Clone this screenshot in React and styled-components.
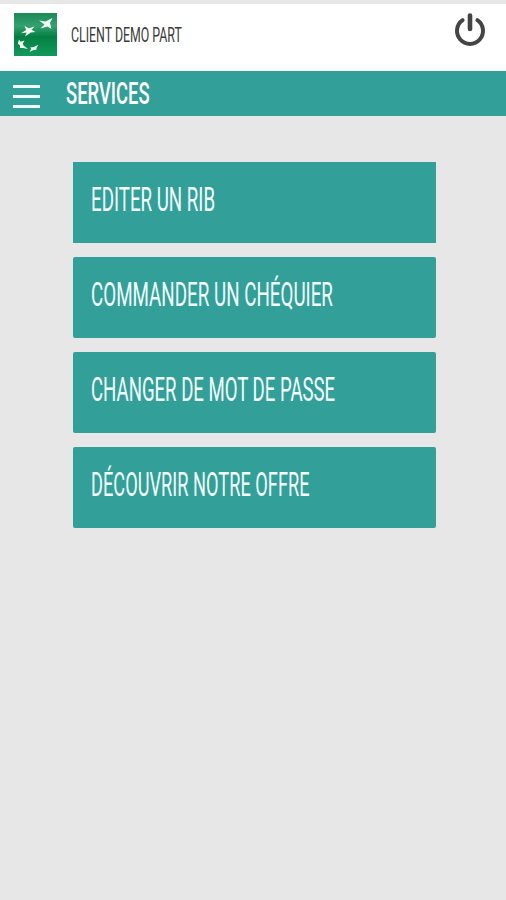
import React from 'react'
import styled, { createGlobalStyle } from 'styled-components'

const services = [
	{ label: 'EDITER UN RIB', stretch: 0.567, square: true },
	{ label: 'COMMANDER UN CHÉQUIER', stretch: 0.569 },
	{ label: 'CHANGER DE MOT DE PASSE', stretch: 0.563 },
	{ label: 'DÉCOUVRIR NOTRE OFFRE', stretch: 0.552 },
]

const Logo = () => (
	<svg width="43" height="43" viewBox="0 0 43 43">
		<defs>
			<linearGradient id="logo-green" x1="0" y1="0" x2="0" y2="1">
				<stop offset="0" stopColor="#1b8a57" />
				<stop offset="0.3" stopColor="#35a070" />
				<stop offset="0.55" stopColor="#047f43" />
				<stop offset="1" stopColor="#119a5c" />
			</linearGradient>
		</defs>
		<rect width="43" height="43" fill="url(#logo-green)" />
		<g fill="#f2fbf2">
			<path d="M25 7.5 L31.5 8.6 L38.5 5 L36 10 L37.5 16 L33.5 13.6 L26.5 15.5 L30.5 11.5 Z" />
			<path d="M10.5 13 L15 15.2 L20.5 13.4 L17.6 16.8 L21.5 19 L16.8 19.4 L11 23.5 L12.6 19.4 L7 20.2 L12.2 17 Z" />
			<path d="M5 26.5 L6.6 28.8 L10.5 27.5 L8.8 30.5 L9.5 32.5 L14 36 L9 35 L6 35 L6 32.5 L3.8 30.5 Z" />
			<path d="M24.5 31.8 L22.5 34.8 L22.5 36.8 L19.5 37 L15.5 39 L17.2 36 L16.2 34.6 L19.8 34 Z" />
		</g>
	</svg>
)

const PowerIcon = () => (
	<svg width="32" height="34" viewBox="0 0 32 34" fill="none" stroke="#444" strokeWidth="4" strokeLinecap="round">
		<path d="M8.6 7.2 A13 13 0 1 0 23.4 7.2" />
		<path d="M16 2.6 V16" strokeWidth="4.6" />
	</svg>
)

const App = () => {
	return (
		<Screen>
			<GlobalStyle />
			<Header>
				<Logo />
				<Client stretch={0.588}>CLIENT DEMO PART</Client>
				<IconButton aria-label="Déconnexion">
					<PowerIcon />
				</IconButton>
			</Header>
			<TitleBar>
				<Burger aria-label="Menu">
					<span />
					<span />
					<span />
				</Burger>
				<Title stretch={0.575}>SERVICES</Title>
			</TitleBar>
			<ServiceList>
				{services.map(({ label, stretch, square }) => (
					<ServiceButton key={label} square={square}>
						<Label stretch={stretch}>{label}</Label>
					</ServiceButton>
				))}
			</ServiceList>
		</Screen>
	)
}

export default App

const GlobalStyle = createGlobalStyle`
	* {
		box-sizing: border-box;
	}

	body {
		margin: 0;
		background-color: #e7e7e7;
	}

	button {
		border: none;
		padding: 0;
		background-color: transparent;
	}
`

const Screen = styled.div`
	min-height: 900px;
	border-top: 4px solid #e7e7e7;
	background-color: #e7e7e7;
	font-family: Roboto, 'Liberation Sans', sans-serif;
`

const Header = styled.header`
	display: flex;
	align-items: flex-start;
	height: 67px;
	padding: 9px 20px 0 14px;
	background-color: #fff;
`

const Condensed = styled.span.withConfig({ shouldForwardProp: (p) => p !== 'stretch' })`
	display: block;
	white-space: nowrap;
	transform: scaleX(${(props) => props.stretch});
	transform-origin: left center;
`

const Client = styled(Condensed)`
	margin: 10px 0 0 14px;
	color: #3a3a3a;
	font-size: 21px;
	font-weight: 400;
	line-height: 25px;
`

const IconButton = styled.button`
	height: 34px;
	margin-left: auto;
`

const TitleBar = styled.div`
	display: flex;
	height: 45px;
	padding-left: 13px;
	background-color: #329f99;
`

const Burger = styled.button`
	display: flex;
	flex-direction: column;
	gap: 7px;
	width: 27px;
	padding-top: 14px;

	span {
		width: 100%;
		height: 3px;
		background-color: #effcfb;
	}
`

const Title = styled(Condensed)`
	margin-left: 26px;
	color: #fff;
	font-size: 32px;
	font-weight: 500;
	line-height: 44px;
`

const ServiceList = styled.main`
	display: flex;
	flex-direction: column;
	gap: 14px;
	padding: 46px 70px 0 73px;
`

const ServiceButton = styled.button.withConfig({ shouldForwardProp: (p) => p !== 'square' })`
	display: flex;
	align-items: center;
	height: 81px;
	padding: 0 0 6px 17.5px;
	border-radius: ${(props) => (props.square ? '0' : '2px')};
	background-color: #329f99;
	color: #f4fffe;
	font-family: inherit;
`

const Label = styled(Condensed)`
	font-size: 33px;
	font-weight: 450;
`
